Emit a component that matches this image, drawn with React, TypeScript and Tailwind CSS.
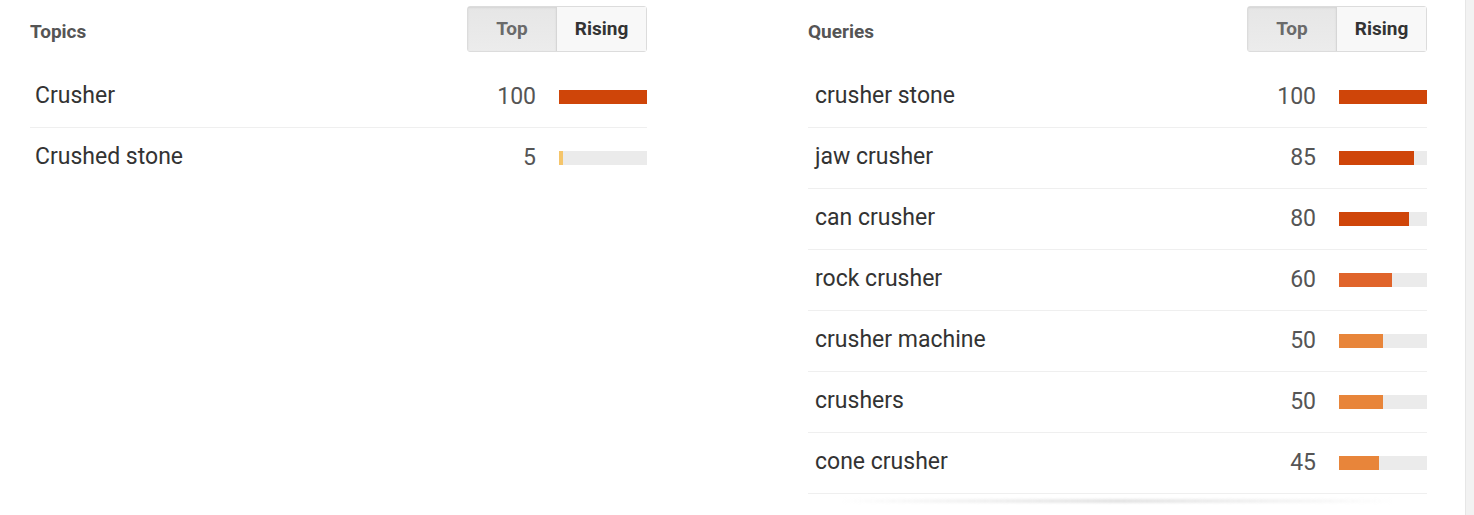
type Item = { label: string; value: number; color: string };

const topics: Item[] = [
  { label: "Crusher", value: 100, color: "#cf4509" },
  { label: "Crushed stone", value: 5, color: "#f5c56a" },
];

const queries: Item[] = [
  { label: "crusher stone", value: 100, color: "#cf4509" },
  { label: "jaw crusher", value: 85, color: "#cf4509" },
  { label: "can crusher", value: 80, color: "#cf4509" },
  { label: "rock crusher", value: 60, color: "#e0642a" },
  { label: "crusher machine", value: 50, color: "#e8853a" },
  { label: "crushers", value: 50, color: "#e8853a" },
  { label: "cone crusher", value: 45, color: "#e8853a" },
];

function Toggle() {
  return (
    <div className="flex h-[46px] rounded-[3px] border border-[#dcdcdc] text-[19px] font-bold">
      <div className="flex w-[89px] items-center justify-center border-r border-[#d6d6d6] bg-gradient-to-b from-[#e6e6e6] to-[#ececec] text-[#6a6a6a] shadow-[inset_0_1px_2px_rgba(0,0,0,0.08)]">
        Top
      </div>
      <div className="flex w-[89px] items-center justify-center bg-[#f8f8f8] text-[#333]">
        Rising
      </div>
    </div>
  );
}

function Panel({
  title,
  items,
  pad,
  width,
  lastLine,
}: {
  title: string;
  items: Item[];
  pad: string;
  width: string;
  lastLine: boolean;
}) {
  return (
    <div className={width}>
      <div className="flex h-[67px] items-start justify-between pt-[6px]">
        <span className="mt-[12px] text-[19px] font-bold text-[#555]">{title}</span>
        <Toggle />
      </div>
      {items.map((it, i) => (
        <div
          key={it.label}
          className={`flex h-[61px] items-center pb-[2px] ${pad} ${
            i < items.length - 1 || lastLine ? "border-b border-[#efefef]" : "border-b border-transparent"
          }`}
        >
          <span className="flex-1 text-[23px] text-[#333]">{it.label}</span>
          <span className="mt-[2px] text-[23px] text-[#555]">{it.value}</span>
          <div className="ml-[23px] mt-[2px] h-[14px] w-[88px] bg-[#ebebeb]">
            <div className="h-full" style={{ width: `${it.value}%`, backgroundColor: it.color }} />
          </div>
        </div>
      ))}
    </div>
  );
}

export default function App() {
  return (
    <div className="flex h-[515px] w-full overflow-hidden bg-white font-['Roboto',sans-serif]">
      <div className="ml-[30px]">
        <Panel title="Topics" items={topics} pad="pl-[5px]" width="w-[617px]" lastLine={false} />
      </div>
      <div className="ml-[161px]">
        <Panel title="Queries" items={queries} pad="pl-[7px]" width="w-[619px]" lastLine />
        <div className="mx-[30px] mt-[5px] h-[4px] rounded-full bg-gradient-to-r from-transparent via-[#e4e4e4] to-transparent blur-[1px]" />
      </div>
      <div className="flex-1" />
      <div className="w-[9px] border-l border-[#e6e6e6] bg-[#f2f2f2]" />
    </div>
  );
}
